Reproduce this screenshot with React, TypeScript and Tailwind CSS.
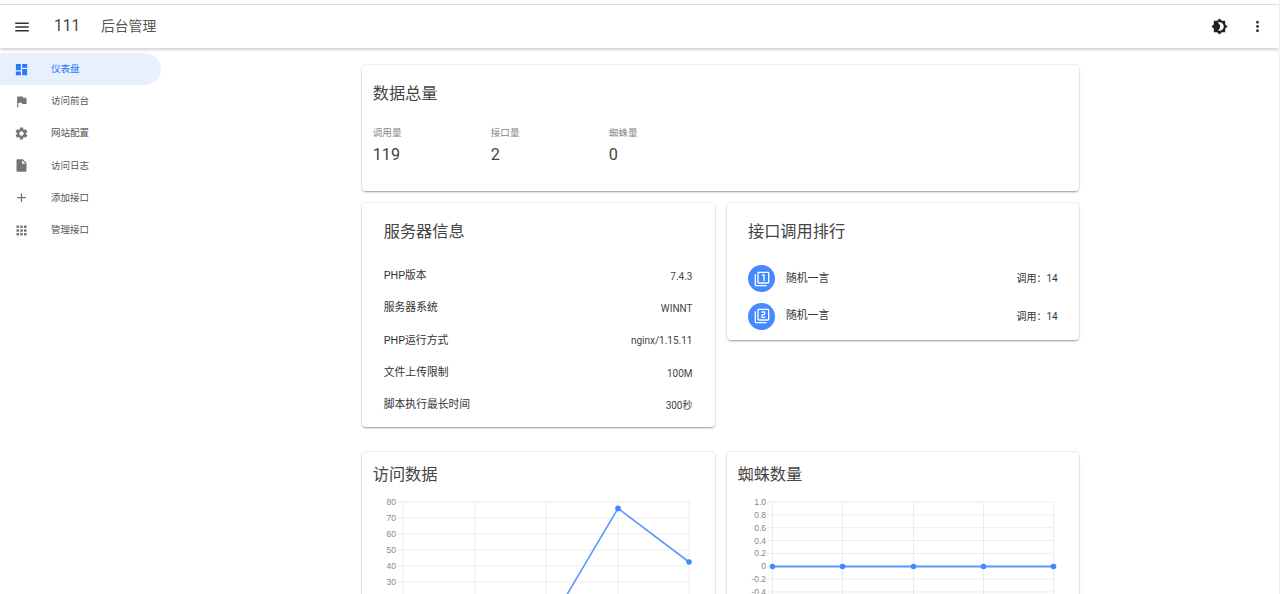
import {
  MdAdd,
  MdApps,
  MdBrightness4,
  MdDashboard,
  MdFilter1,
  MdFilter2,
  MdFlag,
  MdInsertDriveFile,
  MdMenu,
  MdMoreVert,
  MdSettings,
} from "react-icons/md";

const FONT = "font-['Roboto','Noto_Sans_CJK_SC',sans-serif]";

const navItems = [
  { label: "仪表盘", icon: MdDashboard, active: true },
  { label: "访问前台", icon: MdFlag },
  { label: "网站配置", icon: MdSettings },
  { label: "访问日志", icon: MdInsertDriveFile },
  { label: "添加接口", icon: MdAdd },
  { label: "管理接口", icon: MdApps },
];

const stats = [
  { label: "调用量", value: "119" },
  { label: "接口量", value: "2" },
  { label: "蜘蛛量", value: "0" },
];

const serverInfo = [
  ["PHP版本", "7.4.3"],
  ["服务器系统", "WINNT"],
  ["PHP运行方式", "nginx/1.15.11"],
  ["文件上传限制", "100M"],
  ["脚本执行最长时间", "300秒"],
];

const ranks = [
  { id: 1, name: "随机一言", count: "调用：14", icon: MdFilter1 },
  { id: 2, name: "随机一言", count: "调用：14", icon: MdFilter2 },
];

function Card({ className, children }: { className: string; children: React.ReactNode }) {
  return (
    <div
      className={`rounded-[4px] bg-white shadow-[0_0_0_1px_rgba(0,0,0,0.05),0_2px_2px_-1px_rgba(0,0,0,0.28),0_1px_3px_0_rgba(0,0,0,0.12)] ${className}`}
    >
      {children}
    </div>
  );
}

function Title({ children }: { children: React.ReactNode }) {
  return <h2 className="h-6 text-[16.2px] leading-6 text-[#444]">{children}</h2>;
}

function VisitChart() {
  const ys = [80, 70, 60, 50, 40, 30];
  const xs = [403, 475, 546, 618, 689];
  return (
    <svg viewBox="362 495 353 110" className="block h-[110px] w-[353px]">
      {ys.map((v, i) => (
        <g key={v}>
          <line x1="398" x2="689" y1={502 + i * 16} y2={502 + i * 16} stroke="#ececec" />
          <text x="396" y={505 + i * 16} textAnchor="end" fontSize="8.5" fill="#888" fontFamily="Liberation Sans">
            {v}
          </text>
        </g>
      ))}
      {xs.map((x) => (
        <line key={x} x1={x} x2={x} y1="502" y2="605" stroke="#ececec" />
      ))}
      <polyline points="546,630 618,508.4 689,562" fill="none" stroke="#5c96ff" strokeWidth="1.6" />
      <circle cx="618" cy="508.4" r="2.8" fill="#3d8bff" />
      <circle cx="689" cy="562" r="2.8" fill="#3d8bff" />
    </svg>
  );
}

function SpiderChart() {
  const ticks = ["1.0", "0.8", "0.6", "0.4", "0.2", "0", "-0.2", "-0.4"];
  const xs = [772.5, 842.5, 913.5, 983.5, 1053.5];
  return (
    <svg viewBox="727 495 353 110" className="block h-[110px] w-[353px]">
      {ticks.map((t, i) => (
        <g key={t}>
          <line x1="767" x2="1053" y1={502 + i * 12.85} y2={502 + i * 12.85} stroke="#ececec" />
          <text x="766" y={505 + i * 12.85} textAnchor="end" fontSize="8.5" fill="#888" fontFamily="Liberation Sans">
            {t}
          </text>
        </g>
      ))}
      {xs.map((x) => (
        <line key={x} x1={x} x2={x} y1="502" y2="605" stroke="#ececec" />
      ))}
      <line x1="772" x2="1053" y1="566.5" y2="566.5" stroke="#5c96ff" strokeWidth="1.8" />
      {xs.map((x) => (
        <circle key={x} cx={x} cy="566.5" r="2.8" fill="#3d8bff" />
      ))}
    </svg>
  );
}

export default function App() {
  return (
    <div className={`flex h-[594px] w-[1280px] flex-col overflow-hidden border-r border-[#f0f0f0] bg-white ${FONT}`}>
      <header className="relative z-10 mt-1 flex h-11 shrink-0 items-center border-t border-[#dcdcdc] bg-white pr-[13px] pl-[13px] shadow-[0_2px_3px_rgba(0,0,0,0.18)]">
        <MdMenu size={18} className="text-[#333]" />
        <span className="ml-[23px] w-[47px] text-[15.6px] text-[#444]">111</span>
        <span className="text-[13.8px] text-[#555]">后台管理</span>
        <div className="ml-auto flex items-center gap-[21px]">
          <MdBrightness4 size={17} className="text-[#222]" />
          <MdMoreVert size={17} className="text-[#333]" />
        </div>
      </header>

      <div className="flex flex-1">
        <nav className="w-[162px] shrink-0 pt-[5px] pr-px">
          {navItems.map((item) => {
            const Icon = item.icon;
            return (
              <div
                key={item.label}
                className={`flex h-[32.2px] items-center pl-[14px] text-[9.5px] ${
                  item.active ? "rounded-r-full bg-[#e8f0fe] text-[#2979ff]" : "text-[#555]"
                }`}
              >
                <Icon size={15} className={item.active ? "text-[#2979ff]" : "text-[#757575]"} />
                <span className="ml-[22px]">{item.label}</span>
              </div>
            );
          })}
        </nav>

        <main className="flex flex-1 justify-center pt-[17px]">
          <div className="w-[717.5px]">
            <Card className="h-[126px] px-[11px] pt-[17px]">
              <Title>数据总量</Title>
              <div className="mt-[20px] flex">
                {stats.map((s) => (
                  <div key={s.label} className="w-[118px]">
                    <p className="h-[14px] text-[9.6px] leading-[14px] text-[#888]">{s.label}</p>
                    <p className="mt-[4px] h-[22px] text-[16.2px] leading-[22px] text-[#444]">{s.value}</p>
                  </div>
                ))}
              </div>
            </Card>

            <div className="mt-3 grid grid-cols-2 items-start gap-3">
              <Card className="px-[22px] pt-[17px] pb-[6px]">
                <Title>服务器信息</Title>
                <div className="mt-4">
                  {serverInfo.map(([k, v]) => (
                    <div key={k} className="flex h-[32.3px] items-center justify-between text-[10.8px] text-[#333]">
                      <span>{k}</span>
                      <span className="text-[10px] text-[#444]">{v}</span>
                    </div>
                  ))}
                </div>
              </Card>

              <Card className="px-[21.5px] pt-[17px] pb-[5px]">
                <Title>接口调用排行</Title>
                <div className="mt-4">
                  {ranks.map((r) => {
                    const Icon = r.icon;
                    return (
                      <div key={r.id} className="flex h-[37.5px] items-center text-[10px] text-[#333]">
                        <span className="flex h-[27px] w-[27px] items-center justify-center rounded-full bg-[#448aff]">
                          <Icon size={16} className="text-white" />
                        </span>
                        <span className="ml-[11px] text-[10.8px]">{r.name}</span>
                        <span className="ml-auto">{r.count}</span>
                      </div>
                    );
                  })}
                </div>
              </Card>
            </div>

            <div className="mt-[25px] grid grid-cols-2 gap-3">
              <Card className="h-[200px]">
                <div className="px-[11px] pt-[11px]">
                  <Title>访问数据</Title>
                </div>
                <div className="mt-[8px]">
                  <VisitChart />
                </div>
              </Card>
              <Card className="h-[200px]">
                <div className="px-[11px] pt-[11px]">
                  <Title>蜘蛛数量</Title>
                </div>
                <div className="mt-[8px]">
                  <SpiderChart />
                </div>
              </Card>
            </div>
          </div>
        </main>
      </div>
    </div>
  );
}
